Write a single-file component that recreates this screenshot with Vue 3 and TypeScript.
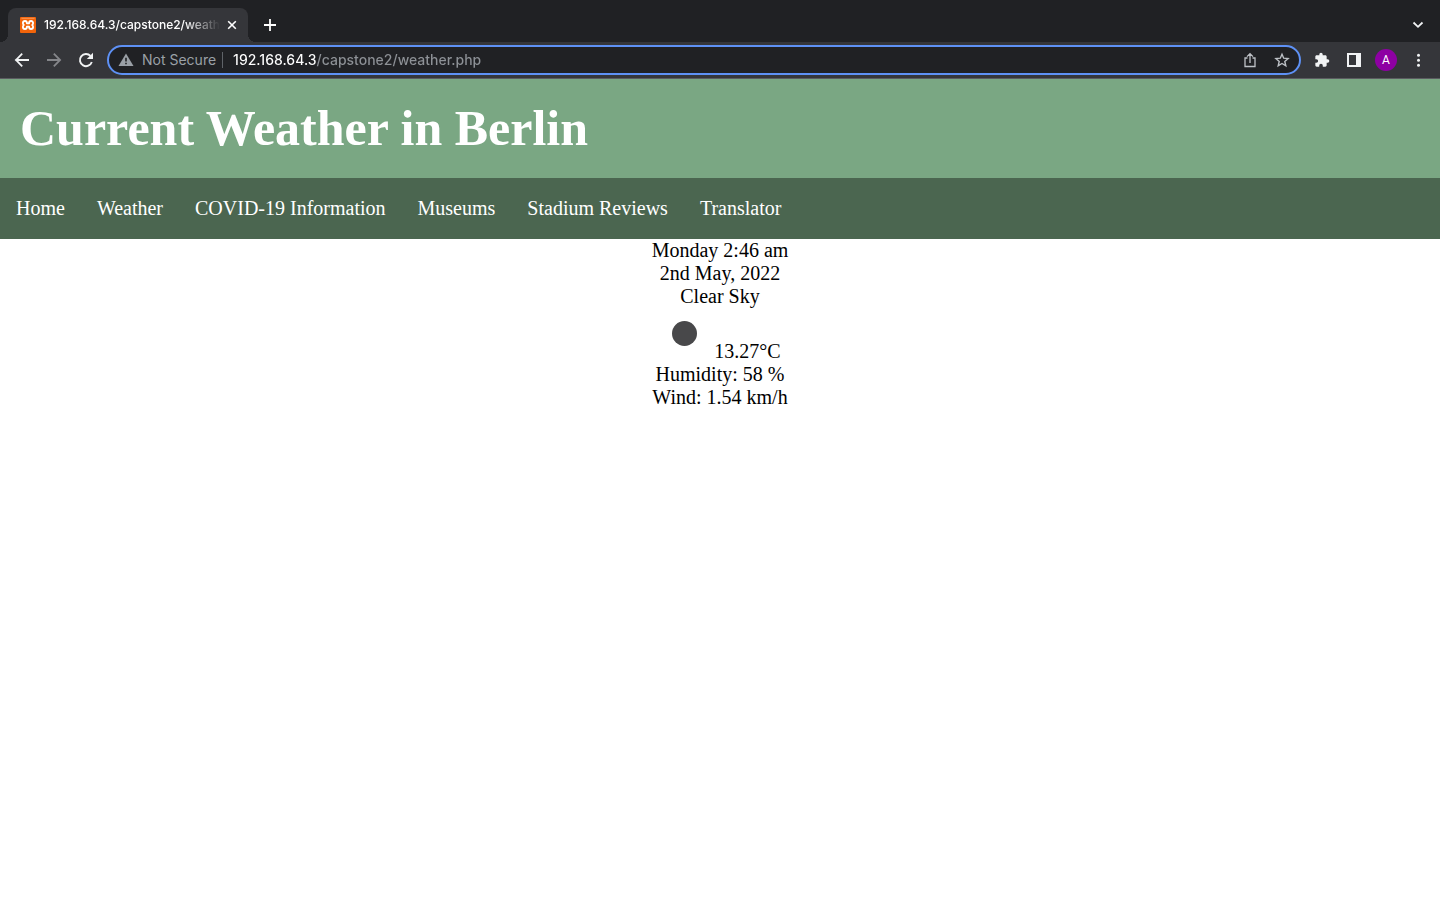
<script setup lang="ts">
import { ref } from 'vue'

const address = ref<string>('192.168.64.3/capstone2/weather.php')
const tabTitle = '192.168.64.3/capstone2/weather.php'

const links: { label: string; href: string }[] = [
  { label: 'Home', href: '#home' },
  { label: 'Weather', href: '#weather' },
  { label: 'COVID-19 Information', href: '#covid' },
  { label: 'Museums', href: '#museums' },
  { label: 'Stadium Reviews', href: '#stadium' },
  { label: 'Translator', href: '#translator' },
]
</script>

<template>
  <div class="window">
    <div class="tabstrip">
      <div class="tab">
        <svg class="favicon" width="16" height="16" viewBox="0 0 16 16" aria-hidden="true">
          <rect width="16" height="16" rx="1" fill="#f2640a" />
          <path d="M1.500 1.300h13" stroke="#f9a66c" stroke-width="0.800" />
          <path
            d="M8 6.300H6.900C6.900 4.700 6.200 4 5 4 3.600 4 2.900 4.900 2.900 6c0 .9.300 1.500.9 2-.6.500-.9 1.100-.9 2 0 1.100.7 2 2.100 2 1.200 0 1.900-.7 1.900-2.300h2.200C9.100 11.300 9.800 12 11 12c1.400 0 2.100-.9 2.100-2 0-.9-.3-1.500-.9-2 .6-.500.9-1.100.9-2 0-1.100-.7-2-2.100-2-1.200 0-1.900.7-1.900 2.300z"
            fill="none"
            stroke="#fff"
            stroke-width="1.800"
            stroke-linejoin="round"
          />
        </svg>
        <span class="tab-title">{{ tabTitle }}</span>
        <button class="icon-button tab-close" type="button" aria-label="Close tab">
          <svg width="16" height="16" viewBox="0 0 16 16">
            <path d="M4.200 4.200l7.600 7.600M11.800 4.200l-7.600 7.600" stroke="#fff" stroke-width="1.600" />
          </svg>
        </button>
      </div>
      <button class="icon-button new-tab" type="button" aria-label="New tab">
        <svg width="16" height="16" viewBox="0 0 16 16">
          <path d="M8 2v12M2 8h12" stroke="#fff" stroke-width="1.800" />
        </svg>
      </button>
      <button class="icon-button tab-search" type="button" aria-label="Search tabs">
        <svg width="16" height="16" viewBox="0 0 16 16">
          <path d="M3.500 5.500L8 9.800 12.500 5.500" fill="none" stroke="#f1f3f4" stroke-width="1.800" />
        </svg>
      </button>
    </div>

    <div class="toolbar">
      <button class="icon-button nav-button" type="button" aria-label="Back">
        <svg width="20" height="20" viewBox="0 0 20 20">
          <path d="M17 10H4M10.200 3.700L3.900 10l6.300 6.300" fill="none" stroke="#f1f3f4" stroke-width="1.800" />
        </svg>
      </button>
      <button class="icon-button nav-button" type="button" aria-label="Forward" disabled>
        <svg width="20" height="20" viewBox="0 0 20 20">
          <path d="M3 10h13M9.800 3.700l6.300 6.300-6.300 6.300" fill="none" stroke="#85868a" stroke-width="1.800" />
        </svg>
      </button>
      <button class="icon-button nav-button" type="button" aria-label="Reload">
        <svg width="20" height="20" viewBox="0 0 20 20">
          <path d="M15.800 12A6.100 6.100 0 1 1 14.500 5.900" fill="none" stroke="#f1f3f4" stroke-width="1.900" />
          <path d="M17 2.800V9h-6.200z" fill="#f1f3f4" />
        </svg>
      </button>

      <form class="omnibox" @submit.prevent>
        <svg class="warning" width="16" height="16" viewBox="0 0 16 16" aria-hidden="true">
          <path d="M8 1.500L15.500 14H.5z" fill="#9aa0a6" />
          <path d="M8 5.800v3.700M8 10.700v1.600" stroke="#202124" stroke-width="1.600" />
        </svg>
        <label class="security" for="address">Not Secure</label>
        <span class="divider"></span>
        <input id="address" v-model="address" class="address" type="text" spellcheck="false" />
        <button class="icon-button box-button" type="button" aria-label="Share this page">
          <svg width="16" height="16" viewBox="0 0 16 16">
            <path
              d="M5.500 6H3v8.500h10V6h-2.500M8 11V1.800M5 4.600l3-3 3 3"
              fill="none"
              stroke="#bdc1c6"
              stroke-width="1.300"
            />
          </svg>
        </button>
        <button class="icon-button box-button" type="button" aria-label="Bookmark this tab">
          <svg width="16" height="16" viewBox="0 0 16 16">
            <path
              d="M8 2.200l1.700 4 4.400.4-3.300 2.900 1 4.300L8 11.500l-3.800 2.300 1-4.300L1.900 6.600l4.400-.4z"
              fill="none"
              stroke="#bdc1c6"
              stroke-width="1.400"
            />
          </svg>
        </button>
      </form>

      <button class="icon-button nav-button" type="button" aria-label="Extensions">
        <svg width="16" height="16" viewBox="0 0 24 24">
          <path
            d="M20.500 11H19V7c0-1.100-.9-2-2-2h-4V3.500a2.500 2.500 0 0 0-5 0V5H4c-1.100 0-2 .9-2 2v3.800h1.500a2.700 2.700 0 0 1 0 5.400H2V20c0 1.100.9 2 2 2h3.800v-1.500a2.700 2.700 0 0 1 5.400 0V22H17c1.100 0 2-.9 2-2v-4h1.500a2.500 2.500 0 0 0 0-5z"
            fill="#f1f3f4"
          />
        </svg>
      </button>
      <button class="icon-button nav-button" type="button" aria-label="Side panel">
        <svg width="14" height="14" viewBox="0 0 14 14">
          <path d="M0 0h14v14H0zM2 2v10h7V2z" fill="#f1f3f4" fill-rule="evenodd" />
        </svg>
      </button>
      <button class="icon-button nav-button" type="button" aria-label="Profile">
        <span class="avatar">A</span>
      </button>
      <button class="icon-button nav-button" type="button" aria-label="Menu">
        <svg width="16" height="16" viewBox="0 0 16 16" fill="#f1f3f4">
          <circle cx="8.500" cy="3.200" r="1.500" />
          <circle cx="8.500" cy="8.200" r="1.500" />
          <circle cx="8.500" cy="13.200" r="1.500" />
        </svg>
      </button>
    </div>

    <header class="banner">
      <h1>Current Weather in Berlin</h1>
    </header>

    <nav class="menu">
      <a v-for="link in links" :key="link.label" :href="link.href">{{ link.label }}</a>
    </nav>

    <main class="report">
      <div>Monday 2:46 am</div>
      <div>2nd May, 2022</div>
      <div>Clear Sky</div>
      <div>
        <svg class="sky" width="50" height="50" viewBox="0 0 50 50" role="img" aria-label="Clear sky">
          <circle cx="25.500" cy="25.500" r="12.500" fill="#48484a" />
        </svg>
        13.27°C
      </div>
      <div>Humidity: 58 %</div>
      <div>Wind: 1.54 km/h</div>
    </main>
  </div>
</template>

<style>
body {
  margin: 0;
  background: #fff;
}
</style>

<style scoped>
.window {
  font-family: "Liberation Serif", "Times New Roman", serif;
  font-size: 20px;
  line-height: 23px;
  color: #000;
}

.icon-button {
  display: flex;
  align-items: center;
  justify-content: center;
  flex: none;
  padding: 0;
  border: 0;
  background: none;
}

.tabstrip {
  display: flex;
  align-items: flex-end;
  height: 42px;
  padding: 0 8px;
  box-sizing: border-box;
  background: #202124;
  font-family: Inter, Roboto, sans-serif;
}

.tab {
  position: relative;
  display: flex;
  align-items: center;
  width: 240px;
  height: 34px;
  padding: 0 8px 0 12px;
  box-sizing: border-box;
  border-radius: 8px 8px 0 0;
  background: #35363a;
}

.tab::before,
.tab::after {
  content: "";
  position: absolute;
  bottom: 0;
  width: 8px;
  height: 8px;
}

.tab::before {
  left: -8px;
  background: radial-gradient(circle at 0 0, #202124 8px, #35363a 8px);
}

.tab::after {
  right: -8px;
  background: radial-gradient(circle at 100% 0, #202124 8px, #35363a 8px);
}

.favicon {
  flex: none;
  margin-right: 8px;
}

.tab-title {
  flex: 1;
  overflow: hidden;
  white-space: nowrap;
  font-size: 12px;
  font-weight: 500;
  line-height: 16px;
  color: #fff;
  mask-image: linear-gradient(90deg, #000 80%, transparent);
}

.tab-close {
  margin-left: 4px;
}

.new-tab {
  width: 28px;
  height: 34px;
  margin-left: 8px;
}

.tab-search {
  width: 28px;
  height: 34px;
  margin-left: auto;
}

.toolbar {
  display: flex;
  align-items: center;
  height: 37px;
  padding: 0 6px;
  box-sizing: border-box;
  border-bottom: 1px solid #5b5c60;
  background: #35363a;
  font-family: Inter, Roboto, sans-serif;
}

.nav-button {
  width: 32px;
  height: 32px;
}

.omnibox {
  display: flex;
  flex: 1;
  align-items: center;
  height: 30px;
  margin: 0 5px;
  padding: 0 1px 0 9px;
  box-sizing: border-box;
  border: 2px solid #5e91f5;
  border-radius: 15px;
  background: #202124;
  font-size: 14px;
  line-height: 24px;
}

.security {
  margin-left: 8px;
  color: #9aa0a6;
  white-space: nowrap;
}

.divider {
  width: 1px;
  height: 16px;
  margin: 0 10px 0 6px;
  background: #5f6368;
}

.address {
  flex: 1;
  min-width: 0;
  height: 24px;
  padding: 0;
  border: 0;
  outline: 0;
  font: inherit;
  font-weight: 500;
  color: transparent;
  caret-color: #fff;
  background: linear-gradient(90deg, #fff 83px, #8d9196 83px);
  background-clip: text;
}

.box-button {
  width: 32px;
  height: 24px;
}

.avatar {
  width: 22px;
  border-radius: 50%;
  background: #8e00a3;
  color: #fff;
  font-family: Roboto, sans-serif;
  font-size: 12px;
  line-height: 22px;
}

.banner {
  padding: 20px;
  background: #7aa783;
}

.banner h1 {
  margin: 0;
  font-size: 50px;
  line-height: 59px;
  color: #fff;
}

.menu {
  display: flex;
  flex-wrap: wrap;
  background: #4b6650;
}

.menu a {
  padding: 19px 16px;
  color: #fff;
  text-decoration: none;
}

.report {
  text-align: center;
}

.sky {
  vertical-align: baseline;
}
</style>
